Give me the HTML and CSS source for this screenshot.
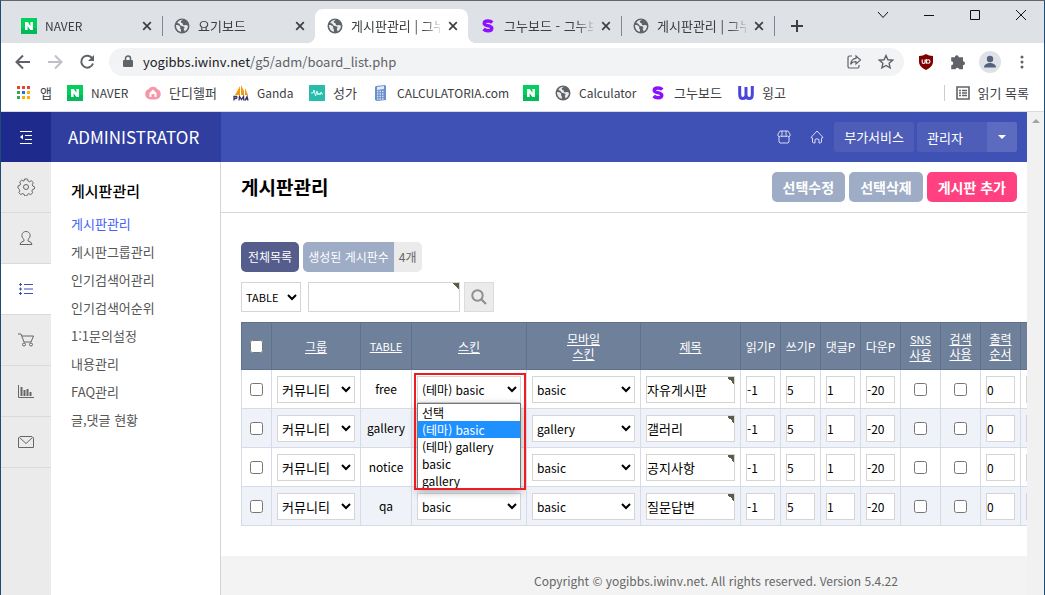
FILE: index.html
```html
<!DOCTYPE html>
<html lang="ko">
<head>
<meta charset="utf-8">
<title>게시판관리 | 그누보드</title>
<link rel="stylesheet" href="styles.css">
</head>
<body>
<svg class="defs" aria-hidden="true">
  <symbol id="globe" viewBox="0 0 16 16"><circle cx="8" cy="8" r="7.5" fill="#5f6368"/><path d="M2 7c1.500 0 3 .3 4 1.500.8 1-.5 1.500.5 2.500.7.700.5 2 .5 2.700C4 13.500 1.800 10.500 2 7zM9 1.800c-1 .7-2.500 1-2.200 2.200.3 1.300 2 .6 2 2 0 1.200 1 1.500 2.200 1.200 1-.3 2.200-.2 3 .8-.2 2.500-1.500 4.500-3.500 5.500.2-1-.3-1.800-1-2.500 1-.7 1.500-1.500.5-2.200-1.200-.8-3-.3-4-2C5.500 5.500 4.500 5.500 3.300 5 4.500 2.800 6.500 1.600 9 1.800z" fill="#e8eaed"/></symbol>
  <symbol id="naver" viewBox="0 0 16 16"><path d="M0 0h16v16H0z" fill="#03cf5d"/><path d="M0 10h16v6H0z" fill="#04b95a"/><path d="M4 4h2.800l2.600 3.900V4H12v8H9.300L6.600 8.100V12H4z" fill="#fff"/></symbol>
  <symbol id="sir" viewBox="0 0 16 16"><path d="M12.300 4.700C11 3.300 9.500 3 8 3 5.700 3 4.200 4 4.200 5.400 4.200 8.300 11.800 7 11.800 10.200c0 1.500-1.700 2.500-3.900 2.500-1.800 0-3.200-.5-4.300-1.700" fill="none" stroke="#8a12ff" stroke-width="3.400"/></symbol>
  <symbol id="close" viewBox="0 0 10 10"><path d="M1.200 1.200l7.600 7.600M8.800 1.200L1.200 8.800" stroke="#3c4043" stroke-width="1.700" fill="none"/></symbol>
</svg>

<header class="browser">
  <div class="tabstrip">
    <div class="tab"><svg class="ico"><use href="#naver"/></svg><span class="tab-name latin">NAVER</span><button class="tab-close" aria-label="닫기"><svg><use href="#close"/></svg></button></div>
    <div class="tab last-before"><svg class="ico"><use href="#globe"/></svg><span class="tab-name">요기보드</span><button class="tab-close" aria-label="닫기"><svg><use href="#close"/></svg></button></div>
    <div class="tab active"><svg class="ico"><use href="#globe"/></svg><span class="tab-name">게시판관리 | 그누</span><button class="tab-close" aria-label="닫기"><svg><use href="#close"/></svg></button></div>
    <div class="tab"><svg class="ico"><use href="#sir"/></svg><span class="tab-name">그누보드 - 그누보</span><button class="tab-close" aria-label="닫기"><svg><use href="#close"/></svg></button></div>
    <div class="tab"><svg class="ico"><use href="#globe"/></svg><span class="tab-name">게시판관리 | 그누</span><button class="tab-close" aria-label="닫기"><svg><use href="#close"/></svg></button></div>
    <button class="new-tab" aria-label="새 탭"><svg width="12" height="12" viewBox="0 0 12 12"><path d="M6 0v12M0 6h12" stroke="#3c4043" stroke-width="2"/></svg></button>
    <div class="window-buttons">
      <button aria-label="탭 검색"><svg width="12" height="12" viewBox="0 0 12 12"><path d="M1 3l5 5.500L11 3"/></svg></button>
      <button aria-label="최소화"><svg width="12" height="12" viewBox="0 0 12 12"><path d="M1 6.500h10"/></svg></button>
      <button aria-label="최대화"><svg width="12" height="12" viewBox="0 0 12 12"><path d="M1.500 1.500h9v9h-9z"/></svg></button>
      <button aria-label="창 닫기"><svg width="12" height="12" viewBox="0 0 12 12"><path d="M1 1l10 10M11 1L1 11"/></svg></button>
    </div>
  </div>

  <div class="toolbar">
    <button class="nav" aria-label="뒤로"><svg width="16" height="16" viewBox="0 0 16 16"><path d="M15 8H2M8 1.500L1.500 8 8 14.500" stroke="#5f6368" stroke-width="2" fill="none"/></svg></button>
    <button class="nav" aria-label="앞으로"><svg width="16" height="16" viewBox="0 0 16 16"><path d="M1 8h13M8 1.500L14.500 8 8 14.500" stroke="#bdc1c6" stroke-width="2" fill="none"/></svg></button>
    <button class="nav" aria-label="새로고침"><svg width="16" height="16" viewBox="0 0 16 16"><path d="M13.400 4.500A6 6 0 1 0 14 9.500" stroke="#5f6368" stroke-width="2" fill="none"/><path d="M15 1v6H9z" fill="#5f6368"/></svg></button>
    <div class="address">
      <svg width="10" height="13" viewBox="0 0 10 13"><path d="M1 5h8a1 1 0 0 1 1 1v5a1 1 0 0 1-1 1H1a1 1 0 0 1-1-1V6a1 1 0 0 1 1-1z" fill="#5f6368"/><path d="M2.500 5V3.500a2.500 2.500 0 0 1 5 0V5" stroke="#5f6368" stroke-width="1.500" fill="none"/></svg>
      <span class="url"><b>yogibbs.iwinv.net</b>/g5/adm/board_list.php</span>
      <button aria-label="공유"><svg width="16" height="16" viewBox="0 0 16 16" fill="none" stroke="#5f6368" stroke-width="1.200"><path d="M6 2H3.500A1.500 1.500 0 0 0 2 3.500v9A1.500 1.500 0 0 0 3.500 14h8a1.500 1.500 0 0 0 1.500-1.500V11"/><path d="M10 2l4.500 4L10 10V7.700C7.500 7.500 5.800 8.500 4.600 10.300 5 7 6.800 4.600 10 4.300z"/></svg></button>
      <button aria-label="북마크"><svg width="16" height="16" viewBox="0 0 16 16"><path d="M8 1.500l1.900 4.300 4.700.4-3.500 3.100 1 4.600L8 11.500l-4.100 2.400 1-4.600L1.400 6.200l4.700-.4z" fill="none" stroke="#5f6368" stroke-width="1.400"/></svg></button>
    </div>
    <button class="nav" aria-label="uBlock"><svg width="16" height="16" viewBox="0 0 16 16"><path d="M8 0c2 1.300 4 1.800 7 2v5.500c0 4-3 6.500-7 8.500-4-2-7-4.500-7-8.500V2c3-.2 5-.7 7-2z" fill="#800000"/><path d="M4.200 5.500v2.600a1.400 1.400 0 0 0 2.800 0V5.500M8.300 5v4.700" fill="none" stroke="#fff" stroke-width="1.100"/><circle cx="10.200" cy="7.500" r="1.800" fill="none" stroke="#fff" stroke-width="1.100"/></svg></button>
    <button class="nav" aria-label="확장 프로그램"><svg width="16" height="16" viewBox="0 0 16 16"><path d="M4.800 3.200a2 2 0 0 1 4 0H13v4a2 2 0 0 1 0 4V15.300H9.300a2 2 0 0 0-3.900 0H1.200v-4a2 2 0 0 0 0-4V3.200z" fill="#5f6368"/></svg></button>
    <button class="nav" aria-label="프로필"><svg width="22" height="22" viewBox="0 0 22 22"><circle cx="11" cy="11" r="11" fill="#dee1e6"/><circle cx="11" cy="8" r="3.200" fill="#54637c"/><path d="M5 16.500c0-6 12-6 12 0z" fill="#54637c"/></svg></button>
    <button class="nav" aria-label="메뉴"><svg width="4" height="14" viewBox="0 0 4 14" fill="#5f6368"><circle cx="2" cy="2" r="1.500"/><circle cx="2" cy="7" r="1.500"/><circle cx="2" cy="12" r="1.500"/></svg></button>
  </div>

  <nav class="bookmarks">
    <a href="#"><svg class="ico" viewBox="0 0 16 16"><path d="M1 1h3v3H1zM6 1h3v3H6zM11 1h3v3h-3z" fill="#ea4335"/><path d="M1 6h3v3H1zM1 11h3v3H1z" fill="#34a853"/><path d="M6 6h3v3H6z" fill="#1a73e8"/><path d="M11 6h3v3h-3zM6 11h3v3H6zM11 11h3v3h-3z" fill="#fbae05"/></svg>앱</a>
    <a class="latin" href="#"><svg class="ico"><use href="#naver"/></svg>NAVER</a>
    <a href="#"><svg class="ico" viewBox="0 0 16 16"><path d="M4 4c1-3 7-3 8 0 4 1 5 6 2 9-2 2-10 2-12 0-3-3-2-8 2-9z" fill="#f597a8"/><path d="M4.500 12V8L8 4.500 11.500 8v4z" fill="#fff"/><path d="M6.500 9h3v3h-3z" fill="#f597a8"/></svg>단디헬퍼</a>
    <a class="latin" href="#"><svg class="ico" viewBox="0 0 16 16"><path d="M2 10L7 1v9zM8 10V0l3 6v4zM12 10V3l3 7z" fill="#f89c0e"/><path d="M1 15.500V11.500h2.500q1 1.200-.3 2H1.500M6 15.500l.5-4 2 3 2-3 .3 4M12 15.500l2-4 1 4M12.800 14h2" fill="none" stroke="#34346c" stroke-width="1.300"/></svg>Ganda</a>
    <a href="#"><svg class="ico" viewBox="0 0 16 16"><path d="M0 0h16v16H0z" fill="#2bbbad"/><path d="M2 8h2l1-3 1.500 6L8 6l1 4 1-2 1 2 1-3 1 2h1" fill="none" stroke="#d5fff8"/></svg>성가</a>
    <a class="latin" href="#"><svg class="ico" viewBox="0 0 16 16"><path d="M3 1l9-1 1 1v14l-9 1-2-1V2z" fill="#6d90c9"/><path d="M4 2l7-1v3L4 5z" fill="#dcecff"/><path d="M4 6.500h7M4 9h7M4 11.500h7M4 14h7" stroke="#cbdffa" stroke-width="1.500" stroke-dasharray="1.500 1"/></svg>CALCULATORIA.com</a>
    <a href="#" aria-label="NAVER"><svg class="ico"><use href="#naver"/></svg></a>
    <a class="latin" href="#"><svg class="ico"><use href="#globe"/></svg>Calculator</a>
    <a href="#"><svg class="ico"><use href="#sir"/></svg>그누보드</a>
    <a href="#"><svg class="ico" viewBox="0 0 16 16"><path d="M1.700 1v8.500q0 4 3 4t3.300-3V2M8 10.500q.3 3 3.300 3t3-4V1" fill="none" stroke="#4a46dd" stroke-width="3"/></svg>윙고</a>
    <a class="reading" href="#"><svg width="14" height="14" viewBox="0 0 14 14"><path d="M1 1h12v12H1z" fill="none" stroke="#5f6368" stroke-width="1.600"/><path d="M3 4.500h2M6 4.500h5M3 7h2M6 7h5M3 9.500h2M6 9.500h5" stroke="#5f6368" stroke-width="1.300"/></svg>읽기 목록</a>
  </nav>
</header>

<div class="viewport">
<div class="page">
  <header class="admin-bar">
    <button class="menu-toggle" aria-label="메뉴"><svg width="14" height="14" viewBox="0 0 14 14"><path d="M1 1.500h12M6 5.500h7M6 9.500h7M1 13.500h12" stroke="#fff" stroke-width="1"/><path d="M4 4.500v5L1 7z" fill="#fff"/></svg></button>
    <a class="logo" href="#">ADMINISTRATOR</a>
    <div class="admin-links">
      <a class="bar-icon" href="#" aria-label="쇼핑몰"><svg width="14" height="14" viewBox="0 0 14 14"><path d="M3 1h8l2 3v2q-1 1.500-2.500 0-1.500 1.500-3.500 0-2 1.500-3.500 0Q2 7.500 1 6V4zM2 7v5l1 1h8l1-1V7M5 1v5M9 1v5"/></svg></a>
      <a class="bar-icon" href="#" aria-label="홈"><svg width="14" height="14" viewBox="0 0 14 14"><path d="M1 7.500L7 1l6 6.500-1.500.5v4l-1 1H9V9.500Q7 8 5 9.500V13H3.500l-1-1V8z"/></svg></a>
      <a class="service" href="#">부가서비스</a>
      <button class="account"><span>관리자</span><i></i></button>
    </div>
  </header>

  <div class="admin-body">
    <nav class="rail">
      <button aria-label="환경설정"><svg width="18" height="18" viewBox="0 0 18 18"><circle cx="9" cy="9" r="2.500"/><path d="M7.500 1h3l.5 2 1.500.7 2-1 1.800 2-1 2 .5 1.300 1.700.8v2l-2 .7-.6 1.500.8 1.800-2 1.800-2-.9-1.200.6-.7 1.700h-2l-.7-1.800-1.500-.6-2 .9-1.700-1.900.9-1.900-.6-1.400L1 10V8l2-.8.6-1.300-.9-2 1.800-1.700 2 .9L7 3z"/></svg></button>
      <button aria-label="회원관리"><svg width="14" height="16" viewBox="0 0 14 16"><path d="M5 9.500C1.500 7 2.500 1.500 7 1.500s5.500 5.500 2 8V11q4 1 4 3.500H1Q1 12 5 11z"/></svg></button>
      <button class="on" aria-label="게시판관리"><svg width="14" height="12" viewBox="0 0 14 12"><path d="M5 1.500h9M5 6h9M5 10.500h9M0 1.500h3M1.500 0v3M0 6h3M1.500 4.500v3M0 10.500h3M1.500 9v3"/></svg></button>
      <button aria-label="쇼핑몰관리"><svg width="16" height="14" viewBox="0 0 16 14"><path d="M0 1h3l3 8h7l2.500-6H4"/><circle cx="6" cy="11.500" r="1.500"/><circle cx="13" cy="11.500" r="1.500"/></svg></button>
      <button aria-label="쇼핑몰현황"><svg width="16" height="13" viewBox="0 0 16 13"><path d="M.5 0v12.500H16"/><path d="M3.500 2v9M6.500 5v6M9.500 4v7M12.500 7v4" stroke-width="2"/></svg></button>
      <button aria-label="SMS 관리"><svg width="16" height="12" viewBox="0 0 16 12"><path d="M2 .5h12l1.500 1.500v9.500H.500V2zM1.500 1.500L8 7.500l6.500-6"/></svg></button>
    </nav>

    <nav class="submenu">
      <h2>게시판관리</h2>
      <a class="on" href="#">게시판관리</a>
      <a href="#">게시판그룹관리</a>
      <a href="#">인기검색어관리</a>
      <a href="#">인기검색어순위</a>
      <a href="#">1:1문의설정</a>
      <a href="#">내용관리</a>
      <a href="#">FAQ관리</a>
      <a href="#">글,댓글 현황</a>
    </nav>

    <main class="main">
      <div class="title-row">
        <h1>게시판관리</h1>
        <button class="act">선택수정</button>
        <button class="act">선택삭제</button>
        <a class="act add" href="#">게시판 추가</a>
      </div>

      <div class="content">
        <div class="summary">
          <a class="all" href="#">전체목록</a>
          <span class="count"><span class="label">생성된 게시판수</span><span class="num">4개</span></span>
        </div>
        <form class="search">
          <select aria-label="검색대상"><option>TABLE</option></select>
          <input class="required" type="text" aria-label="검색어">
          <button type="button" aria-label="검색"><svg width="16" height="16" viewBox="0 0 16 16"><circle cx="6.500" cy="6.500" r="5.200" fill="none" stroke="#8f8f8f" stroke-width="2"/><path d="M10.500 10.500L15 15" stroke="#8f8f8f" stroke-width="2.200"/></svg></button>
        </form>

        <div class="table-wrap">
        <table>
          <colgroup><col class="c30"><col class="c89"><col class="c51"><col class="c115"><col class="c114"><col class="c100"><col class="c40" span="8"></colgroup>
          <thead>
            <tr>
              <th><input type="checkbox" aria-label="전체 선택"></th>
              <th><a href="#">그룹</a></th>
              <th><a class="small" href="#">TABLE</a></th>
              <th><a href="#">스킨</a></th>
              <th><a href="#">모바일<br>스킨</a></th>
              <th><a href="#">제목</a></th>
              <th>읽기P</th>
              <th>쓰기P</th>
              <th>댓글P</th>
              <th>다운P</th>
              <th><a href="#"><span class="small">SNS</span><br>사용</a></th>
              <th><a href="#">검색<br>사용</a></th>
              <th><a href="#">출력<br>순서</a></th>
              <th></th>
            </tr>
          </thead>
          <tbody>
            <tr>
              <td class="mid"><input type="checkbox" aria-label="free 선택"></td>
              <td><select aria-label="그룹"><option>커뮤니티</option></select></td>
              <td class="mid latin">free</td>
              <td>
                <div class="dropdown">
                  <select class="latin" aria-label="스킨"><option>(테마) basic</option></select>
                  <ul class="options latin" role="listbox">
                    <li role="option">선택</li>
                    <li role="option" aria-selected="true">(테마) basic</li>
                    <li role="option">(테마) gallery</li>
                    <li role="option">basic</li>
                    <li role="option">gallery</li>
                  </ul>
                  <div class="highlight"></div>
                </div>
              </td>
              <td><select class="latin" aria-label="모바일 스킨"><option>basic</option></select></td>
              <td><input class="required" type="text" aria-label="제목" value="자유게시판"></td>
              <td><input class="latin" type="text" aria-label="읽기" value="-1"></td>
              <td><input class="latin" type="text" aria-label="쓰기" value="5"></td>
              <td><input class="latin" type="text" aria-label="댓글" value="1"></td>
              <td><input class="latin" type="text" aria-label="다운" value="-20"></td>
              <td class="mid"><input type="checkbox" aria-label="SNS"></td>
              <td class="mid"><input type="checkbox" aria-label="검색"></td>
              <td><input class="latin" type="text" aria-label="순서" value="0"></td>
              <td><input type="text" aria-label="접속기기"></td>
            </tr>
            <tr>
              <td class="mid"><input type="checkbox" aria-label="gallery 선택"></td>
              <td><select aria-label="그룹"><option>커뮤니티</option></select></td>
              <td class="mid latin">gallery</td>
              <td><select class="latin" aria-label="스킨"><option>gallery</option></select></td>
              <td><select class="latin" aria-label="모바일 스킨"><option>gallery</option></select></td>
              <td><input class="required" type="text" aria-label="제목" value="갤러리"></td>
              <td><input class="latin" type="text" aria-label="읽기" value="-1"></td>
              <td><input class="latin" type="text" aria-label="쓰기" value="5"></td>
              <td><input class="latin" type="text" aria-label="댓글" value="1"></td>
              <td><input class="latin" type="text" aria-label="다운" value="-20"></td>
              <td class="mid"><input type="checkbox" aria-label="SNS"></td>
              <td class="mid"><input type="checkbox" aria-label="검색"></td>
              <td><input class="latin" type="text" aria-label="순서" value="0"></td>
              <td><input type="text" aria-label="접속기기"></td>
            </tr>
            <tr>
              <td class="mid"><input type="checkbox" aria-label="notice 선택"></td>
              <td><select aria-label="그룹"><option>커뮤니티</option></select></td>
              <td class="mid latin">notice</td>
              <td><select class="latin" aria-label="스킨"><option>basic</option></select></td>
              <td><select class="latin" aria-label="모바일 스킨"><option>basic</option></select></td>
              <td><input class="required" type="text" aria-label="제목" value="공지사항"></td>
              <td><input class="latin" type="text" aria-label="읽기" value="-1"></td>
              <td><input class="latin" type="text" aria-label="쓰기" value="5"></td>
              <td><input class="latin" type="text" aria-label="댓글" value="1"></td>
              <td><input class="latin" type="text" aria-label="다운" value="-20"></td>
              <td class="mid"><input type="checkbox" aria-label="SNS"></td>
              <td class="mid"><input type="checkbox" aria-label="검색"></td>
              <td><input class="latin" type="text" aria-label="순서" value="0"></td>
              <td><input type="text" aria-label="접속기기"></td>
            </tr>
            <tr>
              <td class="mid"><input type="checkbox" aria-label="qa 선택"></td>
              <td><select aria-label="그룹"><option>커뮤니티</option></select></td>
              <td class="mid latin">qa</td>
              <td><select class="latin" aria-label="스킨"><option>basic</option></select></td>
              <td><select class="latin" aria-label="모바일 스킨"><option>basic</option></select></td>
              <td><input class="required" type="text" aria-label="제목" value="질문답변"></td>
              <td><input class="latin" type="text" aria-label="읽기" value="-1"></td>
              <td><input class="latin" type="text" aria-label="쓰기" value="5"></td>
              <td><input class="latin" type="text" aria-label="댓글" value="1"></td>
              <td><input class="latin" type="text" aria-label="다운" value="-20"></td>
              <td class="mid"><input type="checkbox" aria-label="SNS"></td>
              <td class="mid"><input type="checkbox" aria-label="검색"></td>
              <td><input class="latin" type="text" aria-label="순서" value="0"></td>
              <td><input type="text" aria-label="접속기기"></td>
            </tr>
          </tbody>
        </table>
        </div>
      </div>
      <footer class="footer">Copyright © yogibbs.iwinv.net. All rights reserved. Version 5.4.22</footer>
    </main>
  </div>
</div>
<div class="scrollbar"><i></i></div>
</div>
</body>
</html>
```

FILE: styles.css
```css
* { box-sizing: border-box; }
body, button, input, select { font-family: "Noto Sans CJK KR", sans-serif; font-size: 13px; }
body {
  margin: 0;
  height: 100vh;
  display: flex;
  flex-direction: column;
  overflow: hidden;
  background: #fff;
  color: #000;
  border: 1px solid #1b4d75;
  border-top-color: #646668;
  border-bottom: 0;
}
a { color: inherit; text-decoration: none; }
button { border: 0; padding: 0; background: none; color: inherit; display: flex; align-items: center; justify-content: center; }
h1, h2, ul { margin: 0; padding: 0; }
.defs { position: absolute; width: 0; height: 0; }
.ico { width: 16px; height: 16px; flex: none; }
.latin { font-size: 12px; }
.small { font-size: 11px; }

/* browser chrome */
.browser { flex: none; color: #3c4043; }
.tabstrip { display: flex; align-items: flex-end; height: 42px; padding-left: 8px; background: #dee1e6; }
.tab { position: relative; display: flex; align-items: center; gap: 8px; width: 153px; height: 34px; padding: 0 10px 0 12px; }
.tab:not(.active):not(.last-before)::after { content: ""; position: absolute; right: -1px; top: 7px; width: 1px; height: 20px; background: #80868b; }
.tab-name { flex: 1; overflow: hidden; white-space: nowrap; line-height: 20px; -webkit-mask-image: linear-gradient(to right, #000 72px, transparent 92px); mask-image: linear-gradient(to right, #000 72px, transparent 92px); }
.tab-close { width: 10px; height: 10px; }
.tab-close svg { width: 10px; height: 10px; }
.tab.active { background: #fff; border-radius: 8px 8px 0 0; }
.tab.active::before, .tab.active::after { content: ""; position: absolute; bottom: 0; width: 8px; height: 8px; }
.tab.active::before { left: -8px; background: radial-gradient(circle at 0 0, #dee1e6 8px, #fff 8px); }
.tab.active::after { right: -8px; background: radial-gradient(circle at 100% 0, #dee1e6 8px, #fff 8px); }
.new-tab { width: 46px; height: 34px; }
.window-buttons { display: flex; align-self: flex-start; margin-left: auto; }
.window-buttons button { width: 46px; height: 28px; }
.window-buttons svg { fill: none; stroke: #111; stroke-width: 1; }

.toolbar { display: flex; align-items: center; height: 37px; padding: 0 6px; }
.nav { width: 32px; height: 28px; flex: none; }
.address { flex: 1; display: flex; align-items: center; height: 28px; margin: 0 6px; padding: 0 10px 0 14px; border-radius: 14px; background: #f1f3f4; }
.url { flex: 1; margin-left: 10px; line-height: 20px; color: #5f6368; }
.url b { font-weight: 400; color: #202124; }
.address button { width: 16px; height: 16px; margin-left: 16px; }

.bookmarks { display: grid; grid-template-columns: 51px 78px 88px 76px 64px 150px 32px 95px 88px 1fr auto; align-items: center; height: 32px; padding: 0 15px 6px 15px; border-bottom: 1px solid #dadce0; }
.bookmarks a { display: flex; align-items: center; gap: 8px; line-height: 20px; white-space: nowrap; }
.bookmarks .reading { border-left: 1px solid #ccc; padding-left: 11px; line-height: 16px; }

/* admin page */
.viewport { flex: 1; display: flex; min-height: 0; }
.page { flex: 1; min-width: 0; display: flex; flex-direction: column; }
.scrollbar { width: 17px; flex: none; background: #f1f1f1; padding: 7px 5px; }
.scrollbar i { display: block; border: 4px solid transparent; border-top: 0; border-bottom-color: #a3a3a3; }
.admin-bar { display: flex; height: 50px; flex: none; background: #3f51b5; color: #fff; }
.menu-toggle { width: 50px; background: #1e2b8c; }
.logo { width: 170px; padding-left: 17px; line-height: 50px; font-size: 17px; background: #303f9f; }
.admin-links { display: flex; align-items: center; margin-left: auto; padding-right: 10px; }
.bar-icon { width: 33px; display: flex; justify-content: center; }
.bar-icon svg { fill: none; stroke: #d9dcf0; stroke-width: 1; }
.service { height: 30px; margin-left: 1px; padding: 0 10px; line-height: 30px; border-radius: 3px; background: #4e5eb8; }
.account { height: 30px; margin-left: 3px; border-radius: 3px; background: #4e5eb8; overflow: hidden; }
.account span { width: 70px; padding-left: 10px; text-align: left; }
.account i { width: 30px; height: 30px; background: #5c6bc0; display: flex; align-items: center; justify-content: center; }
.account i::after { content: ""; border: 4px solid transparent; border-top-color: #fff; border-bottom: 0; }

.admin-body { flex: 1; display: flex; min-height: 0; }
.rail { width: 50px; flex: none; background: #ebebeb; }
.rail button { width: 100%; height: 51px; border-bottom: 1px solid #dadada; }
.rail svg { fill: none; stroke: #666; stroke-width: 1; }
.rail .on { background: #fff; }
.rail .on svg { stroke: #3f51b5; }
.submenu { width: 170px; flex: none; padding: 15px 20px; border-right: 1px solid #d5d5d5; color: #555; }
.submenu h2 { font-size: 15px; font-weight: 500; line-height: 28px; margin-bottom: 5px; color: #000; }
.submenu a { display: block; line-height: 28px; }
.submenu .on { color: #4363f5; }

.main { flex: 1; min-width: 0; display: flex; flex-direction: column; }
.title-row { display: flex; align-items: center; gap: 4px; height: 51px; flex: none; padding: 0 10px 0 20px; border-bottom: 1px solid #d8d8d8; }
.title-row h1 { flex: 1; font-size: 19px; line-height: 28px; font-weight: 700; }
.act { height: 30px; padding: 0 11px; line-height: 30px; border-radius: 5px; background: #9eacc6; color: #fff; font-size: 14px; font-weight: 700; }
.add { background: #ff4081; }
.content { padding: 29px 0 30px 20px; }
.summary { display: flex; gap: 4px; margin-bottom: 10px; font-size: 12px; line-height: 30px; }
.all { padding: 0 7px; border-radius: 5px; background: #555d8c; color: #fff; }
.count { display: flex; border-radius: 5px; overflow: hidden; background: #ebebeb; }
.label { padding: 0 5px; background: #9eacc6; color: #fff; }
.num { padding: 0 5px; color: #666; }
.search { display: flex; margin-bottom: 10px; }
select, input[type="text"] { margin: 0; border: 1px solid #d5d5d5; background-color: #fff; color: #000; border-radius: 0; padding: 0; }
.search select { width: 60px; height: 30px; font-size: 11px; }
.search input { width: 152px; height: 30px; margin: 0 4px 0 7px; }
.search button { width: 30px; height: 30px; border: 1px solid #dcdcdc; background: #ebebeb; }
input.required { background-image: linear-gradient(45deg, transparent 50%, #5b5d4a 50%); background-size: 7px 7px; background-position: top right; background-repeat: no-repeat; }

.table-wrap { overflow: hidden; }
table { table-layout: fixed; width: 820px; border-collapse: collapse; }
.c30 { width: 30px; } .c40 { width: 40px; } .c51 { width: 51px; } .c89 { width: 89px; }
.c100 { width: 100px; } .c114 { width: 114px; } .c115 { width: 115px; }
th { height: 47px; padding: 0; border: 1px solid #60718b; background: #6f809a; color: #fff; font-size: 12px; line-height: 15px; font-weight: 400; white-space: nowrap; }
th a { text-decoration: underline; }
td { height: 39px; padding: 5px; border: 1px solid #d6dce7; line-height: 20px; }
tbody tr:nth-child(even) { background: #eff3f9; }
td select, td input[type="text"] { display: block; width: 100%; height: 27px; }
td.mid { padding: 0; text-align: center; }
input[type="checkbox"] { display: block; width: 13px; height: 13px; margin: 0 auto; }
.dropdown { position: relative; }
.options { position: absolute; z-index: 2; top: 27px; left: 0; right: 0; border: 1px solid #767676; background: #fff; list-style: none; box-shadow: 0 2px 8px rgba(0, 0, 0, .3); }
.options li { padding-left: 4px; line-height: 17px; height: 17px; }
.options li[aria-selected="true"] { background: #1e90ff; color: #fff; }
.highlight { position: absolute; z-index: 3; top: -3px; left: -3px; right: -5px; height: 117px; border: 2px solid #ed1c24; }

.footer { flex: 1; padding: 15px 0 0 313px; background: #f3f3f3; color: #666; font-size: 12px; line-height: 20px; white-space: nowrap; }
```
